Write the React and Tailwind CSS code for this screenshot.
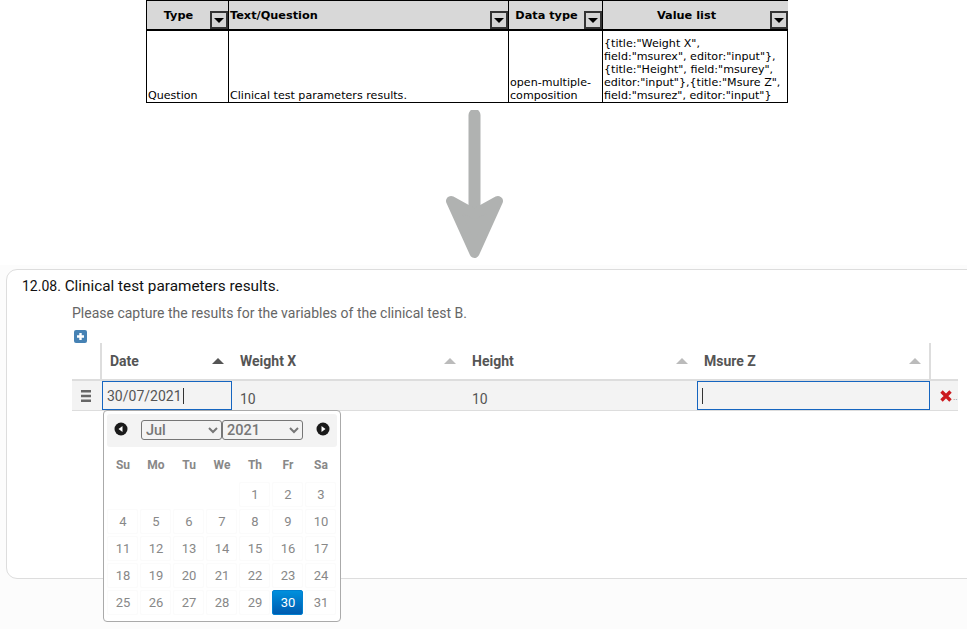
import React from 'react';

const TOP_COLS = 'grid grid-cols-[82px_280px_94px_185px]';
const ROW_COLS = 'grid grid-cols-[30px_130px_232px_232px_235px_27px]';
const WEEK_DAYS = ['Su', 'Mo', 'Tu', 'We', 'Th', 'Fr', 'Sa'];
// 1 July 2021 is a Thursday
const DAYS = [...Array(4).fill(null), ...Array.from({ length: 31 }, (_, i) => i + 1)];

function FilterButton() {
  return (
    <span className="absolute right-0 bottom-0 flex h-[18px] w-[18px] items-center justify-center border-2 border-[#333] bg-[#d4d4d4]">
      <svg width="10" height="5" viewBox="0 0 10 5"><polygon points="0,0 10,0 5,5" fill="#000" /></svg>
    </span>
  );
}

function HeadCell({ label, align = 'text-center', last }) {
  return (
    <div className={`relative h-[28px] bg-[#d8d8d8] pt-[8px] px-[1px] text-[11.3px] leading-[14px] font-bold ${align} ${last ? '' : 'border-r border-black'}`}>
      {label}
      <FilterButton />
    </div>
  );
}

function SortArrow({ active }) {
  return (
    <svg width="12" height="6" viewBox="0 0 12 6" className="shrink-0">
      <polygon points="6,0 12,6 0,6" fill={active ? '#555' : '#bbb'} />
    </svg>
  );
}

function ColHead({ label, active, border }) {
  return (
    <div className={`flex h-[36px] items-center justify-between pl-[8px] pr-[8px] text-[14px] font-bold text-[#555] ${border ? 'border-r-2 border-[#ddd]' : ''}`}>
      {label}
      <SortArrow active={active} />
    </div>
  );
}

function DatePicker() {
  return (
    <div className="absolute left-[31px] top-[67px] z-10 h-[212px] w-[238px] rounded-[4px] border border-[#aaa] bg-white p-[3px] text-[#777]">
      <div className="flex h-[33px] items-center justify-between rounded-[3px] bg-[#f3f3f3] px-[7px]">
        <svg width="14" height="14" viewBox="0 0 14 14" className="-mt-[3px]">
          <circle cx="7" cy="7" r="6.5" fill="#1a1a1a" />
          <polygon points="4.5,7 8.5,4 8.5,10" fill="#fff" />
        </svg>
        <div className="-mt-[1px] flex">
          <select defaultValue="Jul" className="h-[20px] w-[81px] rounded-[3px] border border-[#767676] bg-[#f3f3f3] pl-0 text-[14.5px] font-medium text-[#777]">
            <option>Jul</option>
          </select>
          <select defaultValue="2021" className="h-[20px] w-[81px] rounded-[3px] border border-[#767676] bg-[#f3f3f3] pl-0 text-[14.5px] font-medium text-[#777]">
            <option>2021</option>
          </select>
        </div>
        <svg width="14" height="14" viewBox="0 0 14 14" className="-mt-[3px]">
          <circle cx="7" cy="7" r="6.5" fill="#1a1a1a" />
          <polygon points="9.5,7 5.5,4 5.5,10" fill="#fff" />
        </svg>
      </div>
      <div className="mt-[3px] grid grid-cols-[repeat(7,33px)]">
        {WEEK_DAYS.map((d) => (
          <div key={d} className="flex h-[30px] w-[32px] items-center justify-center text-[12px] font-bold text-[#888]">{d}</div>
        ))}
      </div>
      <div className="mt-[1px] grid grid-cols-[repeat(7,33px)] auto-rows-[27px]">
        {DAYS.map((d, i) => (
          <div key={i} className="flex items-center">
            {d && (
              <span
                className={`flex h-[25px] w-[31px] items-center justify-center rounded-[2px] border pl-px text-[13px] ${
                  d === 30
                    ? 'border-[#0080d0] bg-gradient-to-b from-[#0090dd] to-[#005cb0] text-white'
                    : 'border-[#fbfbfb] bg-white text-[#888]'
                }`}
              >
                {d}
              </span>
            )}
          </div>
        ))}
      </div>
    </div>
  );
}

export default function App() {
  return (
    <div className="h-[629px] w-[967px] overflow-hidden bg-[#fcfcfc] font-['Roboto',sans-serif]">
      <div className="h-[265px] bg-white">
        {/* source spec table */}
        <div className="ml-[146px] w-[642px] border-x border-b border-t border-black font-['DejaVu_Sans',sans-serif] text-black">
          <div className={`${TOP_COLS} border-b-2 border-black`}>
            <HeadCell label={<span className="pr-[18px]">Type</span>} />
            <HeadCell label="Text/Question" align="text-left" />
            <HeadCell label={<span className="pr-[18px]">Data type</span>} />
            <HeadCell label={<span className="pr-[18px]">Value list</span>} last />
          </div>
          <div className={`${TOP_COLS} h-[71px] text-[11.1px] leading-[13px]`}>
            <div className="flex items-end border-r border-black pl-[1px]">Question</div>
            <div className="flex items-end border-r border-black pl-[1px]">Clinical test parameters results.</div>
            <div className="flex items-end border-r border-black pl-[1px]">open-multiple-<br />composition</div>
            <div className="flex items-end pl-[1px]">
              <span>
                {'{title:"Weight X",'}<br />
                {'field:"msurex", editor:"input"},'}<br />
                {'{title:"Height", field:"msurey",'}<br />
                {'editor:"input"},{title:"Msure Z",'}<br />
                {'field:"msurez", editor:"input"}'}
              </span>
            </div>
          </div>
        </div>

        <div className="mt-[7px] ml-[440px] w-[70px]">
          <svg width="70" height="155" viewBox="0 0 70 155" className="block">
            <line x1="34.5" y1="5" x2="34.5" y2="100" stroke="#b0b2b1" strokeWidth="12" strokeLinecap="round" />
            <path d="M11 91 L34.5 104 L58 91 L34.5 143 Z" fill="#b0b2b1" stroke="#b0b2b1" strokeWidth="10" strokeLinejoin="round" />
          </svg>
        </div>
      </div>

      {/* rendered question */}
      <div className="ml-[6px] mt-[4px] h-[310px] w-[1000px] rounded-l-[11px] border border-[#ddd] bg-white pl-[15px] pt-[7px]">
        <div className="h-[18px] text-[15.3px] leading-[18px] text-[#111]">
          <span className="text-[14px]">12.08.</span> Clinical test parameters results.
        </div>
        <div className="mt-[9px] ml-[50px] text-[14px] leading-[18px] text-[#666]">
          Please capture the results for the variables of the clinical test B.
        </div>
        <div className="ml-[52px] mt-[8px]">
          <svg width="13" height="13" viewBox="0 0 13 13" className="block">
            <rect width="13" height="13" rx="2" fill="#4682b4" />
            <path d="M6.5 3v7M3 6.5h7" stroke="#fff" strokeWidth="2.4" />
          </svg>
        </div>

        <div className="relative ml-[50px] w-[886px]">
          <div className={`${ROW_COLS} border-b-2 border-[#ddd]`}>
            <div className="border-r-2 border-[#ddd]" />
            <ColHead label="Date" active />
            <ColHead label="Weight X" />
            <ColHead label="Height" />
            <ColHead label="Msure Z" border />
            <div />
          </div>
          <div className={`${ROW_COLS} h-[30px] items-center border-b border-[#ddd] bg-[#f3f3f3] text-[14px] text-[#555]`}>
            <div className="flex justify-center pr-[2px]">
              <svg width="10" height="12" viewBox="0 0 10 12" className="block">
                <path d="M0 1.25h10M0 6h10M0 10.75h10" stroke="#666" strokeWidth="2.5" />
              </svg>
            </div>
            <div className="flex h-[29px] items-center border border-[#1565c0] pl-[4px] pt-[1px]">
              30/07/2021<span className="ml-[1px] h-[16px] w-px bg-[#333]" />
            </div>
            <div className="pl-[8px] pt-[8px]">10</div>
            <div className="pl-[8px] pt-[8px]">10</div>
            <div className="ml-[1px] mr-[1px] flex h-[29px] items-center border border-[#1565c0] pl-[4px]">
              <span className="h-[16px] w-px bg-[#333]" />
            </div>
            <div className="flex items-center pl-[9px]">
              <span className="flex items-end">
                <svg width="12" height="12" viewBox="0 0 12 12" className="block">
                  <path d="M1.5 1.5l9 9M10.5 1.5l-9 9" stroke="#cc1a1f" strokeWidth="3.4" />
                </svg>
                <span className="ml-[1px] text-[9px] leading-[9px] text-[#777]">..</span>
              </span>
            </div>
          </div>
          <DatePicker />
        </div>
      </div>
    </div>
  );
}
